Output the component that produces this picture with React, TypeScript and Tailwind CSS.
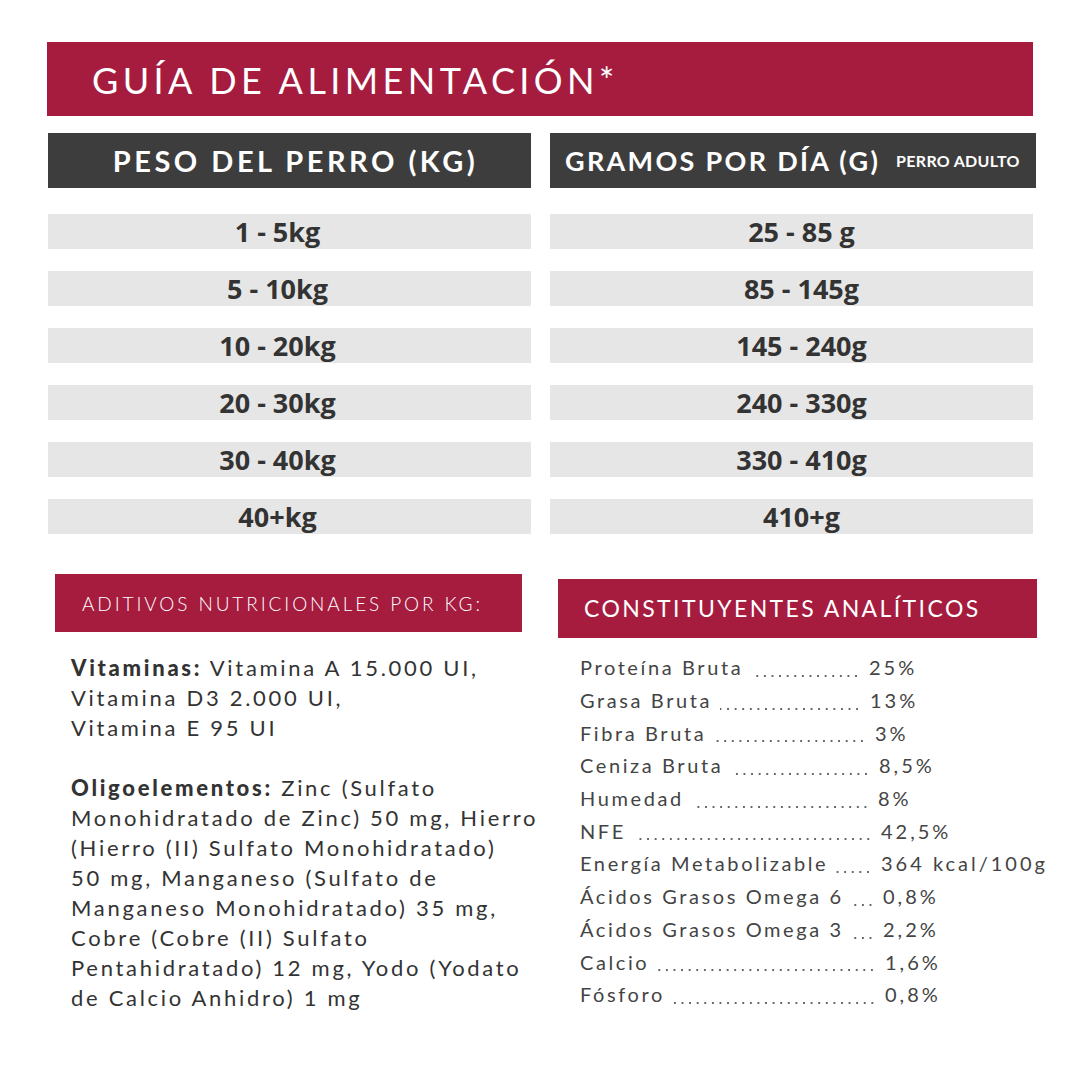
const WEIGHTS = ["1 - 5kg", "5 - 10kg", "10 - 20kg", "20 - 30kg", "30 - 40kg", "40+kg"];
const GRAMS = ["25 - 85 g", "85 - 145g", "145 - 240g", "240 - 330g", "330 - 410g", "410+g"];

// w = where the value starts, measured from the list's left edge
const CONSTITUYENTES = [
  { label: "Proteína Bruta", value: "25%", w: "w-[289px]" },
  { label: "Grasa Bruta", value: "13%", w: "w-[290px]" },
  { label: "Fibra Bruta", value: "3%", w: "w-[295px]" },
  { label: "Ceniza Bruta", value: "8,5%", w: "w-[299px]" },
  { label: "Humedad", value: "8%", w: "w-[298px]" },
  { label: "NFE", value: "42,5%", w: "w-[301px]" },
  { label: "Energía Metabolizable", value: "364 kcal/100g", w: "w-[301px]" },
  { label: "Ácidos Grasos Omega 6", value: "0,8%", w: "w-[303px]" },
  { label: "Ácidos Grasos Omega 3", value: "2,2%", w: "w-[303px]" },
  { label: "Calcio", value: "1,6%", w: "w-[305px]" },
  { label: "Fósforo", value: "0,8%", w: "w-[305px]" },
];

export default function App() {
  return (
    <div className="w-[1080px] h-[1080px] bg-white font-['Lato',sans-serif] text-[#3a3a3a]">
      <div className="pt-[42px] pl-[47px]">
        <div className="w-[986px] h-[74px] bg-[#a51c3f] flex items-center pl-[45px]">
          <h1 className="text-[36px] tracking-[4.4px] text-white font-normal leading-none pt-[2px]">
            GUÍA DE ALIMENTACIÓN*
          </h1>
        </div>
      </div>

      <div className="mt-[17px] pl-[48px] grid grid-cols-[483px_486px] gap-x-[19px]">
        <div className="h-[55px] bg-[#3d3d3d] flex items-center justify-center pl-[12px]">
          <span className="text-white font-bold text-[29px] tracking-[3.5px] leading-none">
            PESO DEL PERRO (KG)
          </span>
        </div>
        <div className="h-[55px] bg-[#3d3d3d] flex items-center pl-[15px] gap-[16px]">
          <span className="text-white font-bold text-[27px] tracking-[2.3px] leading-none">
            GRAMOS POR DÍA (G)
          </span>
          <span className="text-white text-[16px] font-bold leading-none tracking-[0.3px]">
            PERRO ADULTO
          </span>
        </div>
      </div>

      <div className="mt-[26px] pl-[48px] grid grid-cols-[483px_483px] gap-x-[19px] gap-y-[22px] font-['Open_Sans',sans-serif]">
        {WEIGHTS.map((w, i) => (
          <div key={w} className="contents">
            <div className="h-[35px] bg-[#e6e6e6] flex items-center justify-center pr-[24px]">
              <span className="text-[27px] font-bold text-[#333] leading-none">{w}</span>
            </div>
            <div className="h-[35px] bg-[#e6e6e6] flex items-center justify-center pl-[20px]">
              <span className="text-[27px] font-bold text-[#333] leading-none">{GRAMS[i]}</span>
            </div>
          </div>
        ))}
      </div>

      <div className="mt-[40px] flex">
        <div className="pl-[55px] w-[558px] shrink-0">
          <div className="w-[467px] h-[58px] bg-[#a51c3f] flex items-center pl-[27px]">
            <span className="text-white text-[19px] tracking-[2.9px] font-light leading-none">
              ADITIVOS NUTRICIONALES POR KG:
            </span>
          </div>
          <div className="pl-[16px] pt-[21px] text-[22px] leading-[30px] tracking-[2.7px] text-[#333] whitespace-nowrap">
            <p>
              <b className="font-black">Vitaminas:</b> Vitamina A 15.000 UI,
              <br />
              Vitamina D3 2.000 UI,
              <br />
              Vitamina E 95 UI
            </p>
            <p className="mt-[30px]">
              <b className="font-black">Oligoelementos:</b> Zinc (Sulfato
              <br />
              Monohidratado de Zinc) 50 mg, Hierro
              <br />
              (Hierro (II) Sulfato Monohidratado)
              <br />
              50 mg, Manganeso (Sulfato de
              <br />
              Manganeso Monohidratado) 35 mg,
              <br />
              Cobre (Cobre (II) Sulfato
              <br />
              Pentahidratado) 12 mg, Yodo (Yodato
              <br />
              de Calcio Anhidro) 1 mg
            </p>
          </div>
        </div>

        <div className="pt-[5px]">
          <div className="w-[479px] h-[59px] bg-[#a51c3f] flex items-center pl-[26px]">
            <span className="text-white text-[23px] tracking-[2.4px] leading-none">
              CONSTITUYENTES ANALÍTICOS
            </span>
          </div>
          <div className="pl-[22px] pt-[13px] text-[20px] tracking-[2.6px] text-[#444]">
            {CONSTITUYENTES.map((c) => (
              <div key={c.label} className="h-[32.7px] flex items-center whitespace-nowrap">
                <div className={`${c.w} shrink-0 self-stretch flex items-center`}>
                  <span>{c.label}</span>
                  <span className="flex-1 self-stretch ml-[8px] mr-[9px] bg-[radial-gradient(circle,#666_1px,transparent_1.4px)] bg-size-[7.6px_6px] bg-repeat-x bg-position-[right_0_top_22px]" />
                </div>
                <span className="tracking-[3px]">{c.value}</span>
              </div>
            ))}
          </div>
        </div>
      </div>
    </div>
  );
}
